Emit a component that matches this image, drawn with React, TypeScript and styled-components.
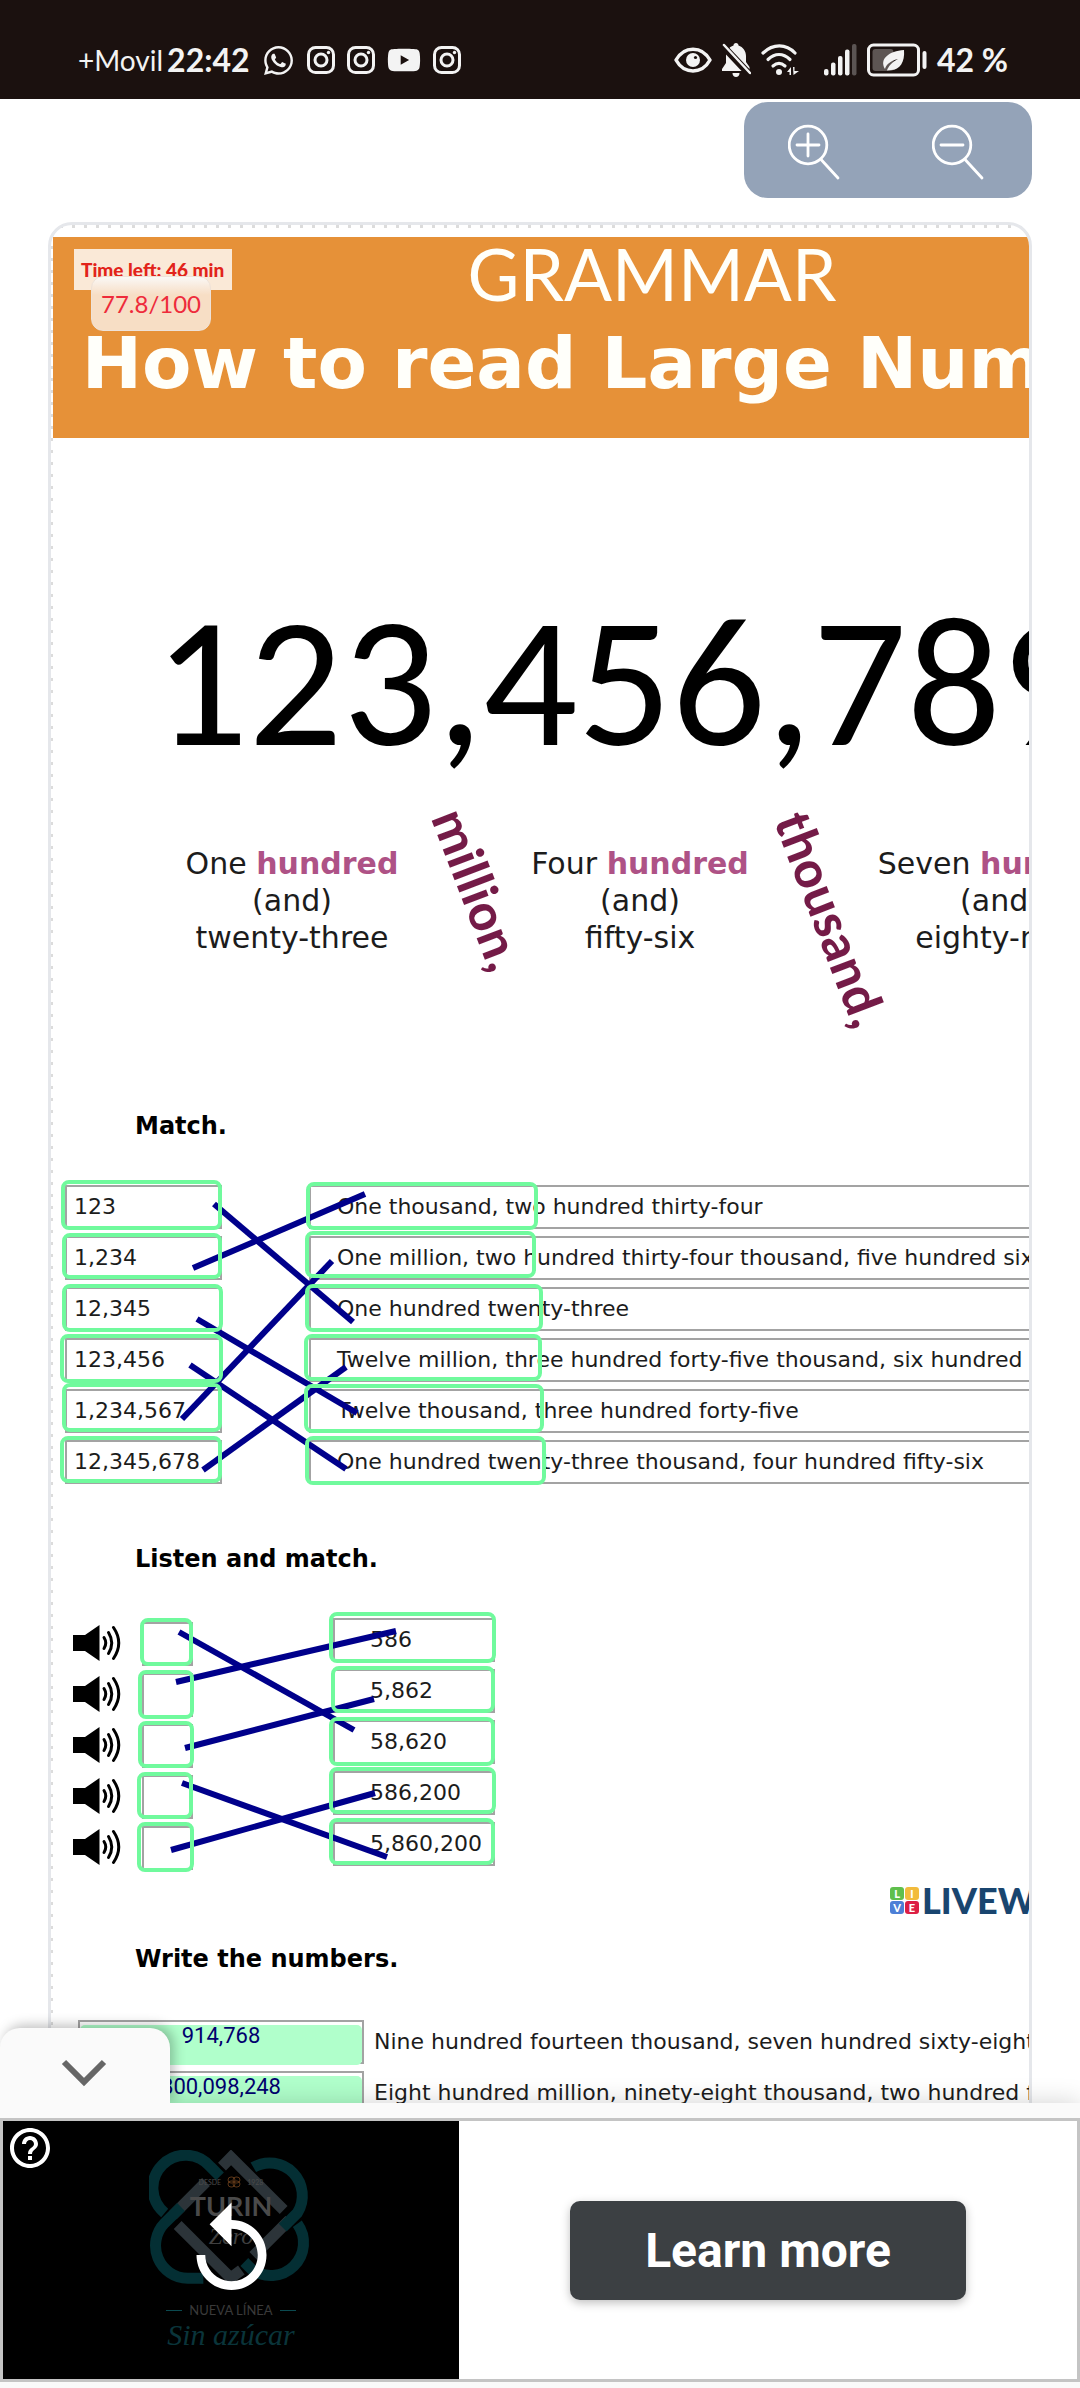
import React from "react";
import styled, { createGlobalStyle } from "styled-components";
import { FaWhatsapp, FaYoutube } from "react-icons/fa";
import { MdHelpOutline, MdReplay } from "react-icons/md";

const GlobalStyle = createGlobalStyle`
  *, *::before, *::after { box-sizing: border-box; }
  body { margin: 0; background: #fff; }
  h1, h2, p { margin: 0; }
  button { font: inherit; border: 0; padding: 0; cursor: pointer; }
`;

const LATO = `Lato, "Open Sans", sans-serif`;
const CALIBRI = `Carlito, Lato, sans-serif`;
const VERDANA = `Verdana, "DejaVu Sans", sans-serif`;
const ROBOTO = `Roboto, "Liberation Sans", sans-serif`;

const Page = styled.div`
  min-height: 100vh;
  overflow: hidden;
  background: #fff;
  font-family: ${LATO};
`;

/* ---------- status bar ---------- */

const StatusBar = styled.header`
  display: flex;
  justify-content: space-between;
  align-items: flex-end;
  height: 99px;
  padding: 0 72px 18px 78px;
  background: #1b110f;
  color: #f3f3f3;
`;

const StatusGroup = styled.div<{ $gap: number }>`
  display: flex;
  align-items: center;
  gap: ${(p) => p.$gap}px;
  height: 42px;
  svg { display: block; flex: none; }
`;

const Carrier = styled.span`
  font-size: 28px;
  line-height: 42px;
`;

const Clock = styled.time`
  font-size: 32px;
  font-weight: 700;
  line-height: 42px;
`;

const Names = styled.div`
  display: flex;
  gap: 4px;
`;

const Percent = styled.span`
  font-size: 32px;
  font-weight: 700;
  line-height: 42px;
`;

const InstagramGlyph = () => (
  <svg width="28" height="28" viewBox="0 0 28 28" fill="none" stroke="currentColor">
    <rect x="1.5" y="1.5" width="25" height="25" rx="7" strokeWidth="3" />
    <circle cx="14" cy="14" r="6" strokeWidth="3" />
    <circle cx="21.5" cy="6.5" r="1.7" fill="currentColor" stroke="none" />
  </svg>
);

const EyeGlyph = () => (
  <svg width="38" height="26" viewBox="0 0 38 26" fill="none" stroke="currentColor">
    <path d="M2 13C10-1.500 28-1.500 36 13C28 27.500 10 27.500 2 13Z" strokeWidth="3.500" strokeLinejoin="round" />
    <circle cx="19" cy="13" r="7" fill="currentColor" stroke="none" />
    <circle cx="21.500" cy="10.500" r="1.600" fill="#1b110f" stroke="none" />
  </svg>
);

const BellOffGlyph = () => (
  <svg width="29" height="34" viewBox="0 0 29 34" fill="currentColor">
    <path d="M14 0c1.500 0 2.500 1 2.500 2.500C21 4 24 8 24 13v6l3.500 5v4H0v-2l4-6v-7c0-5 3-9 7.500-10.500C11.500 1 12.500 0 14 0Z" />
    <path d="M10.500 30h7c0 2.500-1.500 4-3.500 4s-3.500-1.500-3.500-4Z" />
    <path d="M-1 1L30 34" stroke="#1b110f" strokeWidth="7" />
    <path d="M2 2L28 30" stroke="currentColor" strokeWidth="2.500" strokeLinecap="round" />
  </svg>
);

const WifiGlyph = () => (
  <svg width="38" height="32" viewBox="0 0 38 32" fill="none" stroke="currentColor" strokeWidth="3.200" strokeLinecap="round">
    <path d="M2 9C12-.5 25-.5 34 9" />
    <path d="M7 15.500C14 9 22 9 29 15.500" />
    <path d="M12 22C16 18.500 20 18.500 24 22" />
    <circle cx="18" cy="28" r="3" fill="currentColor" stroke="none" />
    <path d="M26 28L30 23V31H28.500V28ZM32 23H33.500V27H38L32.500 31Z" fill="currentColor" stroke="none" />
  </svg>
);

const SignalGlyph = () => (
  <svg width="33" height="32" viewBox="0 0 33 32" fill="currentColor">
    <rect x="0" y="25" width="4.500" height="6.500" rx="2" />
    <rect x="7" y="18.500" width="4.500" height="13" rx="2" />
    <rect x="14" y="12" width="4.500" height="19.500" rx="2" />
    <rect x="21" y="5.500" width="4.500" height="26" rx="2" />
    <rect x="28" y="0" width="4.500" height="31.500" rx="2" opacity=".3" />
  </svg>
);

const BatteryGlyph = () => (
  <svg width="60" height="34" viewBox="0 0 60 34" fill="none">
    <rect x="1.500" y="2" width="50" height="30" rx="5" stroke="currentColor" strokeWidth="3" />
    <rect x="5.500" y="6" width="21" height="22" rx="3" fill="#5d5553" />
    <path d="M37 7C38 19 33 27 24 27L20 27.500C21 24 25 19 31 16C23 18 19 22 18 26C12 16 22 8 37 7Z" fill="currentColor" />
    <rect x="55.500" y="8" width="4" height="18" rx="2" fill="currentColor" />
  </svg>
);

/* ---------- zoom toolbar ---------- */

const ToolbarRow = styled.div`
  display: flex;
  justify-content: flex-end;
  padding: 3px 48px 24px;
`;

const Toolbar = styled.div`
  display: flex;
  border-radius: 24px;
  overflow: hidden;
  background: #94a3b8;
`;

const ZoomButton = styled.button`
  display: flex;
  align-items: center;
  justify-content: center;
  width: 144px;
  height: 96px;
  padding: 4px 4px 0 0;
  background: transparent;
  color: #fff;
`;

const Magnifier = ({ plus }: { plus?: boolean }) => (
  <svg width="52" height="56" viewBox="0 0 52 56" fill="none" stroke="currentColor" strokeWidth="2.800" strokeLinecap="round">
    <circle cx="20" cy="21" r="18.800" />
    <path d="M9 21H31" />
    {plus && <path d="M20 10V32" />}
    <path d="M33.500 36L50 54" />
  </svg>
);

/* ---------- worksheet card ---------- */

const Card = styled.main`
  position: relative;
  margin: 0 48px;
  border: 3px solid #e5e7eb;
  border-radius: 24px;
  overflow: hidden;
  padding: 12px 0 0 2px;
  background:
    repeating-linear-gradient(90deg, transparent 0 9px, #dcdcdc 9px 12px) 0 0 / 100% 3px no-repeat,
    repeating-linear-gradient(180deg, transparent 0 9px, #dcdcdc 9px 12px) 0 0 / 2px 100% no-repeat,
    #fff;
`;

const Sheet = styled.article`
  width: 1198px;
  padding-bottom: 60px;
  background: #fff;
  color: #1c1c1c;
  font-family: ${VERDANA};
`;

const Banner = styled.div`
  padding-bottom: 23px;
  background: #e69138;
  color: #fffffa;
  text-align: center;
  white-space: nowrap;
`;

const Subject = styled.p`
  font-family: ${LATO};
  font-size: 71px;
  line-height: 74px;
`;

const Title = styled.h1`
  font-size: 72px;
  font-weight: 700;
  line-height: 104px;
`;

const TimeBadge = styled.div`
  position: absolute;
  top: 24px;
  left: 23px;
  padding: 0 8px 0 7px;
  background: rgba(255, 255, 255, 0.8);
  color: #e2231a;
  font-size: 19px;
  font-weight: 900;
  line-height: 41px;
`;

const ScoreBadge = styled.div`
  position: absolute;
  top: 51px;
  left: 40px;
  padding: 0 9px;
  border: 1px solid #eee2d8;
  border-radius: 12px;
  background: linear-gradient(#faf8f6, #f7dec5 34%);
  color: #ee2b3b;
  font-size: 24px;
  line-height: 53px;
`;

const BigNumber = styled.p`
  padding: 164px 0 0 101px;
  color: #000;
  font-family: ${CALIBRI};
  font-size: 186px;
  line-height: 160px;
`;

const Reading = styled.div`
  display: flex;
  align-items: flex-start;
  min-height: 349px;
  padding: 83px 0 0 114px;
`;

const Caption = styled.p`
  width: 250px;
  font-size: 30px;
  line-height: 37px;
  text-align: center;
  white-space: nowrap;
  b { color: #ae5286; }
`;

const Unit = styled.div<{ $width: number; $height: number }>`
  display: flex;
  align-items: center;
  justify-content: center;
  width: ${(p) => p.$width}px;
  height: ${(p) => p.$height}px;
  padding-left: 22px;
  color: #741b47;
  font-family: ${CALIBRI};
  font-size: 54px;
  font-weight: 700;
  span { transform: rotate(69deg); }
`;

const Heading = styled.h2`
  padding-left: 82px;
  color: #000;
  font-size: 24px;
  font-weight: 700;
  line-height: 30px;
`;

const Exercise = styled.section`
  position: relative;
  display: flex;
  margin: 44px 0 60px;
  font-size: 22px;
`;

const Column = styled.div<{ $left: number; $width?: number; $top?: number }>`
  display: flex;
  flex-direction: column;
  gap: 7px;
  margin-left: ${(p) => p.$left}px;
  padding-top: ${(p) => p.$top ?? 0}px;
  ${(p) => (p.$width ? `width: ${p.$width}px;` : "flex: 1;")}
`;

const Box = styled.div<{ $indent?: number }>`
  height: 44px;
  padding-left: ${(p) => p.$indent ?? 0}px;
  border: 2px solid #a3a3a3;
  line-height: 40px;
  white-space: nowrap;
`;

const Links = styled.svg`
  position: absolute;
  inset: 0;
  width: 100%;
  height: 100%;
  overflow: visible;
  stroke: #00008b;
  stroke-width: 6;
  pointer-events: none;
`;

const Target = styled.button<{ $at: number[] }>`
  position: absolute;
  left: ${(p) => p.$at[0]}px;
  top: ${(p) => p.$at[1]}px;
  width: ${(p) => p.$at[2]}px;
  height: ${(p) => p.$at[3]}px;
  border: 4px solid #70fa9d;
  border-radius: 8px;
  background: transparent;
`;

const SpeakerButton = styled.button`
  display: flex;
  align-items: center;
  height: 44px;
  background: transparent;
  color: #000;
`;

const Speaker = () => (
  <svg width="48" height="36" viewBox="0 0 48 36" fill="none" stroke="currentColor" strokeWidth="3" strokeLinecap="round">
    <path d="M0 10H12L26.500 0V36L12 26H0Z" fill="currentColor" stroke="none" />
    <path d="M31 12.500Q34.500 18 31 23.500" />
    <path d="M35.500 7.500Q42 18 35.500 28.500" />
    <path d="M40.500 2.500Q51 18 40.500 33.500" />
  </svg>
);

const Brand = styled.div`
  display: flex;
  align-items: center;
  gap: 3px;
  height: 28px;
  margin: -44px 0 30px;
  padding-left: 837px;
  color: #19456f;
  font-family: ${LATO};
  font-size: 36px;
  font-weight: 900;
  line-height: 28px;
`;

const Tiles = styled.div`
  display: grid;
  grid-template-columns: 14px 14px;
  gap: 1px;
`;

const Tile = styled.span<{ $color: string }>`
  height: 13px;
  border-radius: 3px;
  background: ${(p) => p.$color};
  color: #fff;
  font-size: 11px;
  line-height: 13px;
  text-align: center;
`;

const Answers = styled.div`
  display: flex;
  flex-direction: column;
  gap: 7px;
  padding: 46px 0 0 25px;
`;

const AnswerRow = styled.label`
  display: flex;
  gap: 10px;
  font-size: 22px;
  line-height: 44px;
  white-space: nowrap;
`;

const AnswerFrame = styled.span`
  width: 286px;
  height: 44px;
  padding-top: 3px;
  border: 2px solid #a3a3a3;
`;

const AnswerInput = styled.input`
  display: block;
  width: 100%;
  height: 40px;
  padding: 0 0 20px;
  border: 0;
  border-radius: 5px;
  background: #b0ffcb;
  color: #00006e;
  font-family: ${ROBOTO};
  font-size: 22px;
  text-align: center;
`;

/* ---------- advert ---------- */

const Dock = styled.footer`
  position: fixed;
  right: 0;
  bottom: 0;
  left: 0;
  padding: 15px 0 6px;
  background: #fafafa;
  box-shadow: 0 0 24px rgba(0, 0, 0, 0.18);
`;

const CollapseTab = styled.button`
  position: absolute;
  bottom: 100%;
  left: 0;
  display: flex;
  align-items: center;
  justify-content: center;
  width: 170px;
  height: 75px;
  padding: 14px 2px 0 0;
  border-radius: 20px 20px 0 0;
  background: #fafafa;
  color: #666;
  box-shadow: 4px -3px 12px rgba(0, 0, 0, 0.25);
  clip-path: inset(-20px -20px 0 0);
`;

const Ad = styled.section`
  display: flex;
  height: 264px;
  border: 3px solid #c4c4c4;
  background: #fff;
`;

const Video = styled.div`
  position: relative;
  display: flex;
  flex-direction: column;
  align-items: center;
  width: 456px;
  padding-top: 29px;
  background: #000;
`;

const Emblem = styled.div`
  position: relative;
  height: 136px;
`;

const EmblemText = styled.div`
  position: absolute;
  inset: 26px 0 auto;
  display: flex;
  flex-direction: column;
  align-items: center;
  color: #4a4a4a;
`;

const Since = styled.p`
  display: flex;
  align-items: center;
  gap: 6px;
  font-size: 7px;
  line-height: 12px;
  svg { display: block; }
`;

const AdBrand = styled.p`
  font-size: 27px;
  font-weight: 700;
  line-height: 36px;
`;

const Script = styled.p<{ $size: number; $color: string }>`
  color: ${(p) => p.$color};
  font-family: "Liberation Serif", serif;
  font-size: ${(p) => p.$size}px;
  font-style: italic;
  line-height: ${(p) => p.$size}px;
`;

const Line = styled.p`
  display: flex;
  align-items: center;
  gap: 7px;
  margin-top: 14px;
  color: #3a3a3a;
  font-size: 13px;
  line-height: 20px;
  &::before, &::after {
    content: "";
    width: 16px;
    height: 1px;
    background: #0b4a50;
  }
`;

const CornerButton = styled.button`
  position: absolute;
  top: 3px;
  left: 3px;
  background: transparent;
  color: #fff;
  svg { display: block; }
`;

const ReplayButton = styled.button`
  position: absolute;
  inset: 0;
  display: flex;
  align-items: center;
  justify-content: center;
  background: transparent;
  color: #fff;
`;

const AdBody = styled.div`
  display: flex;
  flex: 1;
  align-items: center;
  justify-content: center;
`;

const LearnMore = styled.a`
  width: 396px;
  border-radius: 10px;
  background: #3c4043;
  box-shadow: 0 3px 10px rgba(0, 0, 0, 0.25);
  color: #fff;
  font-family: ${ROBOTO};
  font-size: 48px;
  font-weight: 700;
  line-height: 99px;
  text-align: center;
  text-decoration: none;
`;

const Knot = () => (
  <svg width="164" height="136" viewBox="449 120 492 408" fill="none" strokeWidth="33">
    <g stroke="#2c3439">
      <path d="M620 216L520 316M853 300L695 142L668 170M535 345L694 504L726 480M870 330L762 438" />
    </g>
    <g stroke="#042f34">
      <path d="M496 309A98 98 0 1 1 634 171L662 199" />
      <path d="M762 172A98 98 0 0 1 894 309L850 353" />
      <path d="M545 291L496 339A98 98 0 0 0 565 505H612" />
      <path d="M894 341A98 98 0 0 1 756 477L735 456" />
    </g>
  </svg>
);

/* ---------- content ---------- */

const numbers = ["123", "1,234", "12,345", "123,456", "1,234,567", "12,345,678"];
const words = [
  "One thousand, two hundred thirty-four",
  "One million, two hundred thirty-four thousand, five hundred sixty-seven",
  "One hundred twenty-three",
  "Twelve million, three hundred forty-five thousand, six hundred seventy-eight",
  "Twelve thousand, three hundred forty-five",
  "One hundred twenty-three thousand, four hundred fifty-six",
];
const matchTargets = [
  [8, -5, 161, 50], [9, 48, 160, 46], [9, 99, 161, 48],
  [7, 149, 163, 49], [9, 198, 160, 49], [7, 251, 162, 47],
  [253, -3, 232, 48], [252, 46, 231, 47], [252, 99, 238, 48],
  [251, 149, 238, 47], [251, 199, 240, 49], [252, 251, 241, 49],
];
const matchLinks = [
  [161, 19, 300, 137], [140, 83, 312, 9], [144, 134, 304, 228],
  [137, 180, 293, 284], [129, 234, 279, 76], [150, 285, 293, 182],
];

const heard = ["586", "5,862", "58,620", "586,200", "5,860,200"];
const listenTargets = [
  [87, 0, 53, 48], [85, 52, 56, 49], [85, 103, 56, 47], [84, 154, 56, 47], [84, 204, 57, 50],
  [276, -6, 167, 51], [278, 48, 164, 47], [276, 99, 166, 49], [276, 149, 167, 47], [276, 200, 166, 47],
];
const listenLinks = [
  [126, 14, 301, 112], [123, 64, 343, 13], [132, 130, 321, 81],
  [129, 165, 334, 239], [118, 232, 322, 175],
];

const answers = [
  { value: "914,768", text: "Nine hundred fourteen thousand, seven hundred sixty-eight" },
  { value: "800,098,248", text: "Eight hundred million, ninety-eight thousand, two hundred forty-eight" },
];

const Overlay = ({ links, targets, name }: { links: number[][]; targets: number[][]; name: string }) => (
  <>
    <Links aria-hidden="true">
      {links.map(([x1, y1, x2, y2], i) => (
        <line key={i} x1={x1} y1={y1} x2={x2} y2={y2} />
      ))}
    </Links>
    {targets.map((at, i) => (
      <Target key={i} type="button" $at={at} aria-label={`${name} ${i + 1}`} />
    ))}
  </>
);

export default function App() {
  return (
    <Page>
      <GlobalStyle />
      <StatusBar>
        <StatusGroup $gap={12}>
          <Names>
            <Carrier>+Movil</Carrier>
            <Clock>22:42</Clock>
          </Names>
          <FaWhatsapp size={33} />
          <InstagramGlyph />
          <InstagramGlyph />
          <FaYoutube size={34} />
          <InstagramGlyph />
        </StatusGroup>
        <StatusGroup $gap={10}>
          <EyeGlyph />
          <BellOffGlyph />
          <StatusGroup $gap={25}>
            <WifiGlyph />
            <SignalGlyph />
          </StatusGroup>
          <BatteryGlyph />
          <Percent>42 %</Percent>
        </StatusGroup>
      </StatusBar>

      <ToolbarRow>
        <Toolbar>
          <ZoomButton type="button" aria-label="Zoom in"><Magnifier plus /></ZoomButton>
          <ZoomButton type="button" aria-label="Zoom out"><Magnifier /></ZoomButton>
        </Toolbar>
      </ToolbarRow>

      <Card>
        <Sheet>
          <Banner>
            <Subject>GRAMMAR</Subject>
            <Title>How to read Large Numbers</Title>
          </Banner>

          <BigNumber>123,456,789</BigNumber>
          <Reading>
            <Caption>One <b>hundred</b><br />(and)<br />twenty-three</Caption>
            <Unit $width={98} $height={90}><span>million,</span></Unit>
            <Caption>Four <b>hundred</b><br />(and)<br />fifty-six</Caption>
            <Unit $width={110} $height={150}><span>thousand,</span></Unit>
            <Caption>Seven <b>hundred</b><br />(and)<br />eighty-nine</Caption>
          </Reading>

          <Heading>Match.</Heading>
          <Exercise>
            <Column $left={12} $width={157}>
              {numbers.map((n) => <Box key={n} $indent={7}>{n}</Box>)}
            </Column>
            <Column $left={87}>
              {words.map((w) => <Box key={w} $indent={26}>{w}</Box>)}
            </Column>
            <Overlay name="Match box" links={matchLinks} targets={matchTargets} />
          </Exercise>

          <Heading>Listen and match.</Heading>
          <Exercise>
            <Column $left={20} $width={48} $top={3}>
              {heard.map((h, i) => (
                <SpeakerButton key={h} type="button" aria-label={`Play ${i + 1}`}><Speaker /></SpeakerButton>
              ))}
            </Column>
            <Column $left={21} $width={51} $top={4}>
              {heard.map((h) => <Box key={h} />)}
            </Column>
            <Column $left={140} $width={162}>
              {heard.map((h) => <Box key={h} $indent={35}>{h}</Box>)}
            </Column>
            <Overlay name="Listen box" links={listenLinks} targets={listenTargets} />
          </Exercise>

          <Brand>
            <Tiles>
              <Tile $color="#5fbf4c">L</Tile>
              <Tile $color="#f2bb3c">I</Tile>
              <Tile $color="#4d7fd6">V</Tile>
              <Tile $color="#dc1f45">E</Tile>
            </Tiles>
            LIVEWORKSHEETS
          </Brand>

          <Heading>Write the numbers.</Heading>
          <Answers>
            {answers.map((a) => (
              <AnswerRow key={a.value}>
                <AnswerFrame><AnswerInput defaultValue={a.value} /></AnswerFrame>
                {a.text}
              </AnswerRow>
            ))}
          </Answers>
        </Sheet>
        <TimeBadge>Time left: 46 min</TimeBadge>
        <ScoreBadge>77.8/100</ScoreBadge>
      </Card>

      <Dock>
        <CollapseTab type="button" aria-label="Hide advert">
          <svg width="46" height="28" viewBox="0 0 46 28" fill="none" stroke="currentColor" strokeWidth="6">
            <path d="M3 3L23 23L43 3" />
          </svg>
        </CollapseTab>
        <Ad>
          <Video>
            <Emblem>
              <Knot />
              <EmblemText>
                <Since>
                  DESDE
                  <svg width="14" height="12" viewBox="0 0 14 12" fill="none" stroke="#5a3517" strokeWidth="1">
                    <rect x="1" y="1" width="7" height="6" rx="3" />
                    <rect x="6" y="1" width="7" height="6" rx="3" />
                    <rect x="1" y="5" width="7" height="6" rx="3" />
                    <rect x="6" y="5" width="7" height="6" rx="3" />
                  </svg>
                  1928
                </Since>
                <AdBrand>TURIN</AdBrand>
                <Script $size={24} $color="#3f3f3f">Zero</Script>
              </EmblemText>
            </Emblem>
            <Line>NUEVA LÍNEA</Line>
            <Script $size={30} $color="#0a343a">Sin azúcar</Script>
            <ReplayButton type="button" aria-label="Replay"><MdReplay size={105} /></ReplayButton>
            <CornerButton type="button" aria-label="About this advert"><MdHelpOutline size={48} /></CornerButton>
          </Video>
          <AdBody>
            <LearnMore href="#">Learn more</LearnMore>
          </AdBody>
        </Ad>
      </Dock>
    </Page>
  );
}
